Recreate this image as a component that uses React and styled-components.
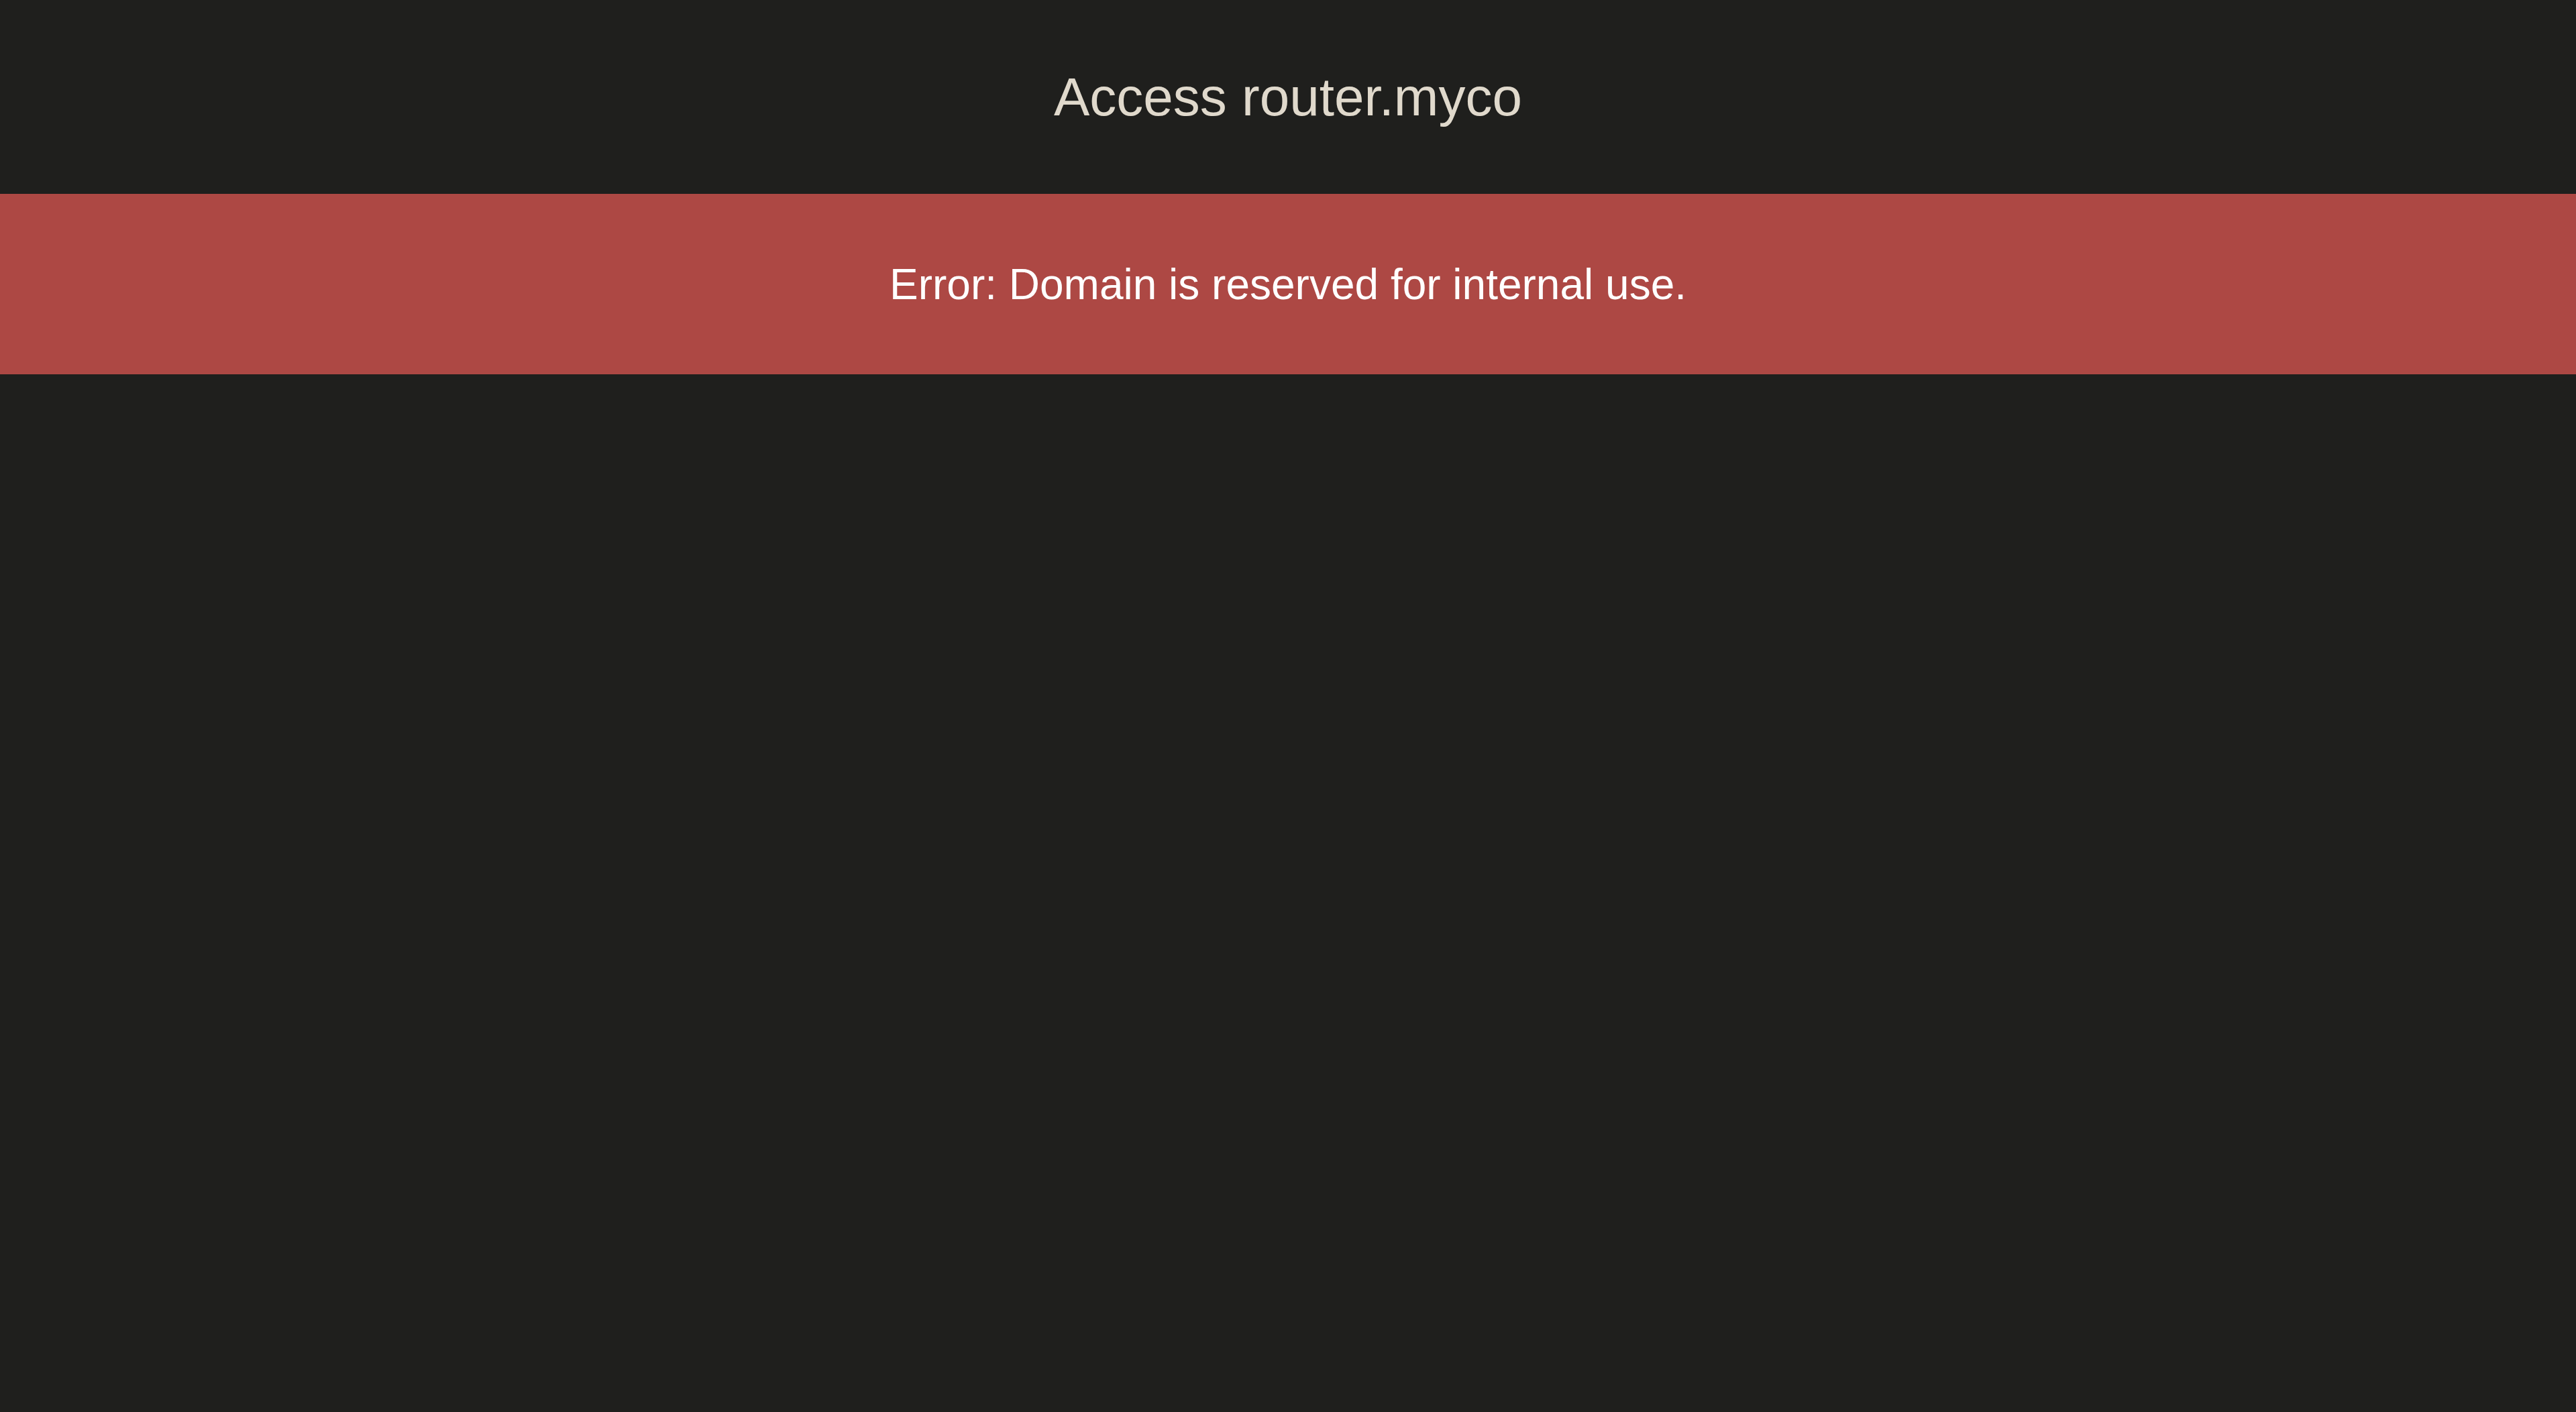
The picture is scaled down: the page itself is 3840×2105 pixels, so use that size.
import React from 'react';
import styled, { createGlobalStyle } from 'styled-components';

const GlobalStyle = createGlobalStyle`
  * {
    box-sizing: border-box;
    margin: 0;
    padding: 0;
  }

  body {
    font-family: "Liberation Sans", Arial, sans-serif;
    background-color: #1f1f1d;
    min-height: 100vh;
  }
`;

const Page = styled.div`
  display: flex;
  flex-direction: column;
  min-height: 100vh;
  background-color: #1f1f1d;
`;

const Header = styled.header`
  display: flex;
  align-items: center;
  justify-content: center;
  height: 289px;
`;

const Title = styled.h1`
  font-size: 80px;
  font-weight: 400;
  line-height: 1;
  color: #e0d9cc;
`;

const ErrorBar = styled.div`
  display: flex;
  align-items: center;
  justify-content: center;
  height: 269px;
  background-color: #ad4844;
`;

const ErrorText = styled.p`
  font-size: 64px;
  line-height: 1;
  color: #ffffff;
`;

const App = () => (
  <>
    <GlobalStyle />
    <Page>
      <Header>
        <Title>Access router.myco</Title>
      </Header>
      <ErrorBar>
        <ErrorText>Error: Domain is reserved for internal use.</ErrorText>
      </ErrorBar>
    </Page>
  </>
);

export default App;
